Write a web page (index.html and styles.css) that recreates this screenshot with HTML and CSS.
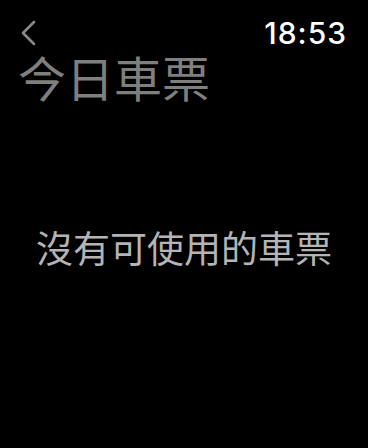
FILE: index.html
```html
<!DOCTYPE html>
<html lang="zh-Hant">
<head>
    <meta charset="UTF-8">
    <meta name="viewport" content="width=device-width, initial-scale=1.0">
    <title>今日車票</title>
    <link rel="stylesheet" href="styles.css">
</head>
<body>
    <div class="screen">
        <div class="status-bar">
            <svg class="back" width="18" height="28" viewBox="0 0 18 28">
                <path d="M15 3 L4 14 L15 25" fill="none" stroke="#8a8a8a" stroke-width="2.6" stroke-linecap="round" stroke-linejoin="round"/>
            </svg>
            <div class="time">18:53</div>
        </div>
        <h1 class="title">今日車票</h1>
        <div class="empty">
            <p>沒有可使用的車票</p>
        </div>
    </div>
</body>
</html>
```

FILE: styles.css
```css
body {
    margin: 0;
    background: #000;
    font-family: "Noto Sans CJK TC", "Noto Sans", sans-serif;
}

.screen {
    width: 368px;
    height: 448px;
    display: flex;
    flex-direction: column;
}

.status-bar {
    display: flex;
    justify-content: space-between;
    align-items: center;
    padding: 18px 21px 0 19px;
    height: 30px;
}

.time {
    font-family: Inter, "Liberation Sans", sans-serif;
    font-weight: 500;
    font-size: 30px;
    letter-spacing: 1px;
    color: #fff;
}

.title {
    margin: 0;
    padding-left: 18px;
    font-size: 48px;
    font-weight: 400;
    line-height: 56px;
    color: #7f7f7f;
}

.empty {
    flex: 1;
    display: flex;
    justify-content: center;
    padding-top: 121px;
}

.empty p {
    margin: 0;
    font-size: 37px;
    line-height: 44px;
    color: #b4b4b4;
}
```
